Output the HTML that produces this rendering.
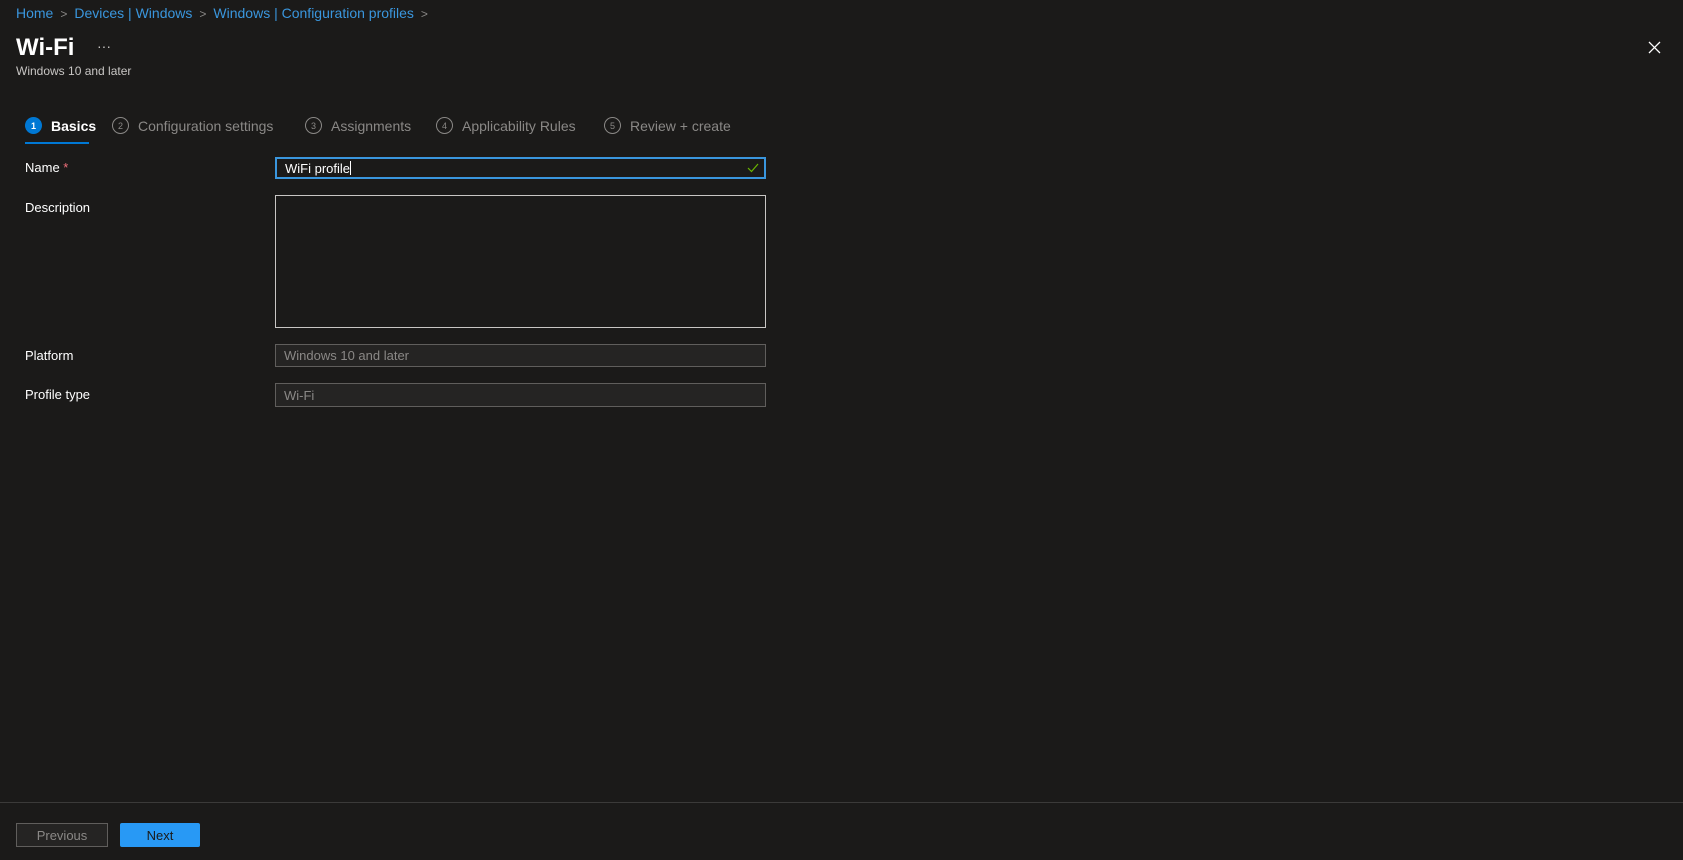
<!DOCTYPE html>
<html><head><meta charset="utf-8"><style>
*{margin:0;padding:0;box-sizing:border-box}
body{width:1683px;height:860px;background:#1b1a19;font-family:"Segoe UI","Liberation Sans",sans-serif;color:#fff;position:relative;overflow:hidden;font-size:14px}
.a{position:absolute;white-space:nowrap}
.bc{color:#3a96dd;font-size:14px;top:5px;left:16px}
.bc span.s{color:#8a8886;margin:0 7px;font-size:12px}
.tab{top:117px;font-size:14px;color:#8a8886;display:flex;align-items:center}
.c{width:17px;height:17px;border:1px solid #8a8886;border-radius:50%;font-size:9px;display:inline-flex;align-items:center;justify-content:center;margin-right:9px;color:#8a8886}
.lbl{left:25px;font-size:13px;color:#fff}
.in{position:absolute;left:275px;width:491px;border:1px solid #605e5c;background:#252423;font-size:13px;color:#8a8886;padding-left:8px;display:flex;align-items:center}
</style></head><body>
<div class="a bc">Home<span class="s">&gt;</span>Devices | Windows<span class="s">&gt;</span>Windows | Configuration profiles<span class="s">&gt;</span></div>
<div class="a" style="left:16px;top:34px;font-size:24px;font-weight:600">Wi-Fi</div>
<div class="a" style="left:97px;top:38px;font-size:14px;color:#c8c6c4">···</div>
<div class="a" style="left:16px;top:64px;font-size:12px;color:#c8c6c4">Windows 10 and later</div>
<svg class="a" style="left:1648px;top:41px" width="13" height="13" viewBox="0 0 13 13"><path d="M1 1L12 12M12 1L1 12" stroke="#fff" stroke-width="1.3"/></svg>
<div class="a tab" style="left:25px;color:#fff;font-weight:600"><span class="c" style="background:#0078d4;border-color:#0078d4;color:#fff">1</span>Basics</div>
<div class="a" style="left:25px;top:142px;width:64px;height:2px;background:#0078d4"></div>
<div class="a tab" style="left:112px"><span class="c">2</span>Configuration settings</div>
<div class="a tab" style="left:305px"><span class="c">3</span>Assignments</div>
<div class="a tab" style="left:436px"><span class="c">4</span>Applicability Rules</div>
<div class="a tab" style="left:604px"><span class="c">5</span>Review + create</div>
<div class="a lbl" style="top:160px">Name <span style="color:#f1707b">*</span></div>
<div class="in" style="top:157px;height:22px;border:2px solid #3a96dd;background:#1b1a19;color:#fff">WiFi profile<span style="border-left:1px solid #fff;height:14px"></span>
<svg style="position:absolute;right:5px;top:4px" width="12" height="10" viewBox="0 0 12 10"><path d="M1 5l3.5 3.5L11 1" stroke="#6bb700" fill="none" stroke-width="1.2"/></svg></div>
<div class="a lbl" style="top:200px">Description</div>
<div class="in" style="top:195px;height:133px;border-color:#c8c6c4;background:#1b1a19"></div>
<div class="a lbl" style="top:348px">Platform</div>
<div class="in" style="top:344px;height:23px">Windows 10 and later</div>
<div class="a lbl" style="top:387px">Profile type</div>
<div class="in" style="top:383px;height:24px">Wi-Fi</div>
<div class="a" style="left:0;top:802px;width:1683px;height:1px;background:#3b3a39"></div>
<div class="a" style="left:16px;top:823px;width:92px;height:24px;border:1px solid #605e5c;background:#252423;color:#8a8886;font-size:13px;display:flex;align-items:center;justify-content:center">Previous</div>
<div class="a" style="left:120px;top:823px;width:80px;height:24px;background:#2899f5;border-radius:2px;color:#1b1a19;font-size:13px;display:flex;align-items:center;justify-content:center">Next</div>
</body></html>
